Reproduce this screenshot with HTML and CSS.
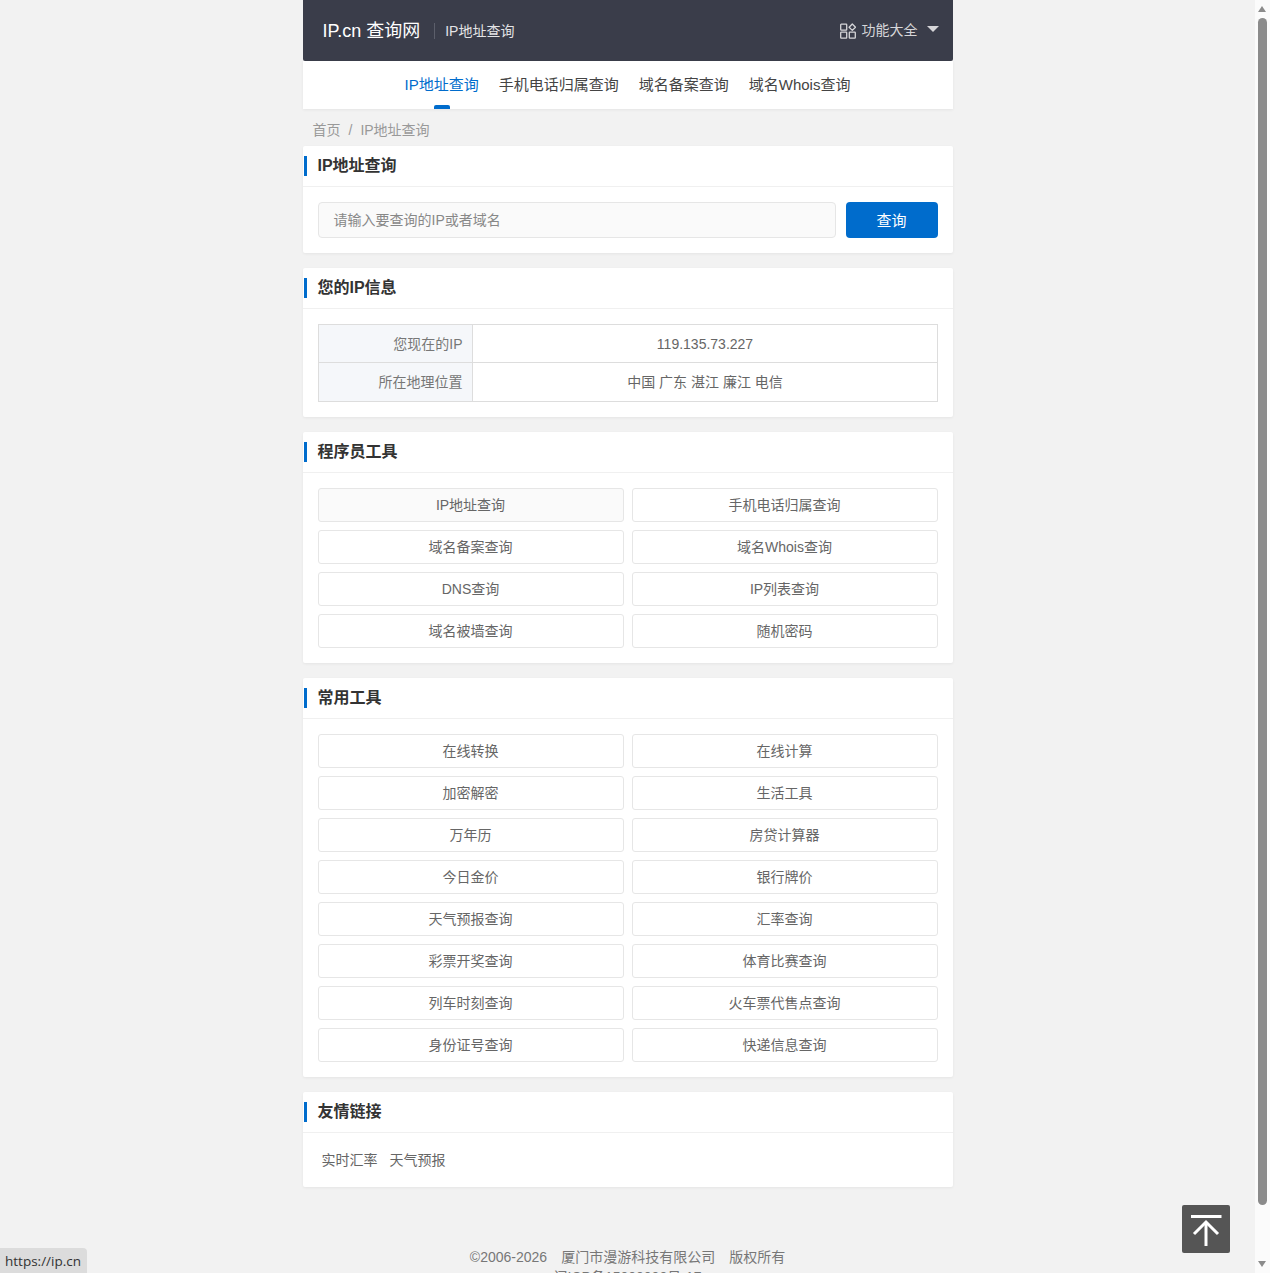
FILE: index.html
```html
<!DOCTYPE html>
<html lang="zh-CN">
<head>
<meta charset="utf-8">
<title>IP地址查询</title>
<link rel="stylesheet" href="styles.css">
</head>
<body>
<div class="wrap">
  <header class="topbar">
    <div class="brand"><span class="logo">IP.cn 查询网</span><span class="subtitle">IP地址查询</span></div>
    <div class="allfn">
      <svg class="fn-icon" viewBox="0 0 16 16" width="16" height="16" fill="none" stroke="currentColor" stroke-width="1.3"><rect x="0.7" y="1.200" width="6" height="6" rx="0.6"/><path d="M12.300 1l3.200 3.200-3.200 3.200-3.200-3.200z" stroke-linejoin="round"/><rect x="0.7" y="9.200" width="6" height="6" rx="0.6"/><rect x="9.300" y="9.200" width="6" height="6" rx="0.6"/></svg>
      <span>功能大全</span><i class="caret"></i>
    </div>
  </header>
  <nav class="tabs">
    <a class="tab active">IP地址查询</a><a class="tab">手机电话归属查询</a><a class="tab">域名备案查询</a><a class="tab">域名Whois查询</a>
  </nav>
  <div class="crumb"><span>首页</span><span class="sep">/</span><span>IP地址查询</span></div>

  <section class="card">
    <h2 class="card-head">IP地址查询</h2>
    <div class="card-body search">
      <div class="input">请输入要查询的IP或者域名</div>
      <button class="btn">查询</button>
    </div>
  </section>

  <section class="card">
    <h2 class="card-head">您的IP信息</h2>
    <div class="card-body">
      <table class="info">
        <tr class="row-a"><th>您现在的IP</th><td>119.135.73.227</td></tr>
        <tr class="row-b"><th>所在地理位置</th><td>中国 广东 湛江 廉江 电信</td></tr>
      </table>
    </div>
  </section>

  <section class="card">
    <h2 class="card-head">程序员工具</h2>
    <div class="card-body grid">
      <a class="cell current">IP地址查询</a><a class="cell">手机电话归属查询</a>
      <a class="cell">域名备案查询</a><a class="cell">域名Whois查询</a>
      <a class="cell">DNS查询</a><a class="cell">IP列表查询</a>
      <a class="cell">域名被墙查询</a><a class="cell">随机密码</a>
    </div>
  </section>

  <section class="card">
    <h2 class="card-head">常用工具</h2>
    <div class="card-body grid">
      <a class="cell">在线转换</a><a class="cell">在线计算</a>
      <a class="cell">加密解密</a><a class="cell">生活工具</a>
      <a class="cell">万年历</a><a class="cell">房贷计算器</a>
      <a class="cell">今日金价</a><a class="cell">银行牌价</a>
      <a class="cell">天气预报查询</a><a class="cell">汇率查询</a>
      <a class="cell">彩票开奖查询</a><a class="cell">体育比赛查询</a>
      <a class="cell">列车时刻查询</a><a class="cell">火车票代售点查询</a>
      <a class="cell">身份证号查询</a><a class="cell">快递信息查询</a>
    </div>
  </section>

  <section class="card">
    <h2 class="card-head">友情链接</h2>
    <div class="card-body links"><a>实时汇率</a><a>天气预报</a></div>
  </section>

  <footer class="foot">
    <p><span>©2006-2026</span><span>厦门市漫游科技有限公司</span><span>版权所有</span></p>
    <p>闽ICP备15000000号-17</p>
  </footer>
</div>
<a class="totop"><svg viewBox="0 0 48 48" width="48" height="48" fill="none" stroke="#fff" stroke-width="3"><path d="M9 11.500h30.500"/><path d="M24 41V17"/><path d="M12 29l12-12 12 12"/></svg></a>
<div class="status">https://ip.cn</div>
<div class="scrollbar">
  <i class="arrow up"></i>
  <i class="thumb"></i>
  <i class="arrow down"></i>
</div>
</body>
</html>
```
FILE: styles.css
```css
* { box-sizing: border-box; }
html { background: #f2f2f2; overflow: hidden; height: 100%; }
body { margin: 0; width: 1255px; font: 14px/1.5 "Liberation Sans", "Noto Sans CJK SC", sans-serif; color: #666; }
p, h2 { margin: 0; }
.wrap { width: 650px; margin: 0 auto; }
.topbar { height: 61px; background: #3a3d4a; border-radius: 0 0 2px 2px; padding: 0 14px 0 20px; display: flex; align-items: center; justify-content: space-between; color: #fff; }
.brand { display: flex; align-items: center; }
.logo { font-size: 18px; line-height: 24px; }
.subtitle { font-size: 14px; line-height: 16px; margin-left: 14px; padding-left: 10px; border-left: 1px solid #5c5f6b; color: #e4e4e6; }
.allfn { display: flex; align-items: center; padding-bottom: 1px; color: #d6d6d9; font-size: 14px; }
.fn-icon { margin-right: 6px; margin-top: 2px; }
.caret { width: 0; height: 0; margin-left: 9px; margin-bottom: 2px; border: 6px solid transparent; border-top: 6px solid #d6d6d9; border-bottom: 0; }
.tabs { height: 48px; background: #fff; display: flex; justify-content: center; gap: 20px; box-shadow: 0 1px 3px rgba(0,0,0,.06); }
.tab { position: relative; font-size: 15px; line-height: 48px; color: #444; }
.tab.active { color: #006ccc; }
.tab.active::after { content: ""; position: absolute; left: 50%; bottom: 0; width: 16px; height: 4px; margin-left: -8px; background: #006ccc; border-radius: 2px 2px 0 0; }
.crumb { height: 37px; padding: 11px 10px 0; line-height: 20px; color: #999; }
.sep { margin: 0 8px; }
.card { background: #fff; border-radius: 2px; margin-bottom: 15px; box-shadow: 0 1px 3px rgba(0,0,0,.06); }
.card-head { position: relative; height: 41px; padding-left: 15px; border-bottom: 1px solid #f0f0f0; font-size: 16px; line-height: 39px; font-weight: 700; color: #333; }
.card-head::before { content: ""; position: absolute; left: 1px; top: 10px; width: 3px; height: 20px; background: #006ccc; }
.card-body { padding: 15px; }
.search { display: flex; gap: 10px; }
.input { flex: 1; height: 36px; padding-left: 15px; line-height: 34px; background: #fafafa; border: 1px solid #e6e6e6; border-radius: 4px; color: #888; }
.btn { width: 92px; height: 36px; padding: 0 0 2px; border: 0; border-radius: 4px; background: #006ccc; color: #fff; font: 15px "Liberation Sans", "Noto Sans CJK SC", sans-serif; }
.info { width: 100%; border-collapse: collapse; table-layout: fixed; }
.info th, .info td { border: 1px solid #ddd; font-weight: 400; padding: 0 9px; }
.row-a th, .row-a td { height: 38px; padding-top: 1px; }
.row-b th, .row-b td { height: 39px; }
.info th { width: 154px; background: #f5f7fa; text-align: right; color: #777; }
.info td { padding-left: 10px; text-align: center; color: #666; }
.grid { display: grid; grid-template-columns: 1fr 1fr; gap: 8px; }
.cell { height: 34px; line-height: 32px; text-align: center; border: 1px solid #e6e6e6; border-radius: 3px; color: #666; }
.cell.current { background: #fafafa; }
.links { height: 54px; padding: 17px 19px; display: flex; gap: 12px; line-height: 20px; }
.foot { padding-top: 45px; text-align: center; line-height: 20px; color: #777; }
.foot span + span { margin-left: 14px; }
.totop { position: fixed; left: 1182px; top: 1205px; width: 48px; height: 48px; background: #555; border-radius: 2px; display: flex; }
.status { position: fixed; left: 0; bottom: 0; width: 87px; height: 25px; padding-left: 5px; background: #dcdcdc; border-radius: 0 4px 0 0; font-family: "Open Sans", sans-serif; font-size: 13.500px; line-height: 26px; color: #333; }
.scrollbar { position: fixed; top: 0; right: 0; bottom: 0; width: 15px; background: #fbfbfb; }
.thumb { position: absolute; left: 3px; top: 18px; width: 9px; height: 1187px; background: #8b8b8b; border-radius: 5px; }
.arrow { position: absolute; left: 3px; width: 0; height: 0; border: 4.500px solid transparent; }
.arrow.up { top: 6px; border-top: 0; border-bottom: 6px solid #8b8b8b; }
.arrow.down { bottom: 6px; border-bottom: 0; border-top: 6px solid #8b8b8b; }
```
